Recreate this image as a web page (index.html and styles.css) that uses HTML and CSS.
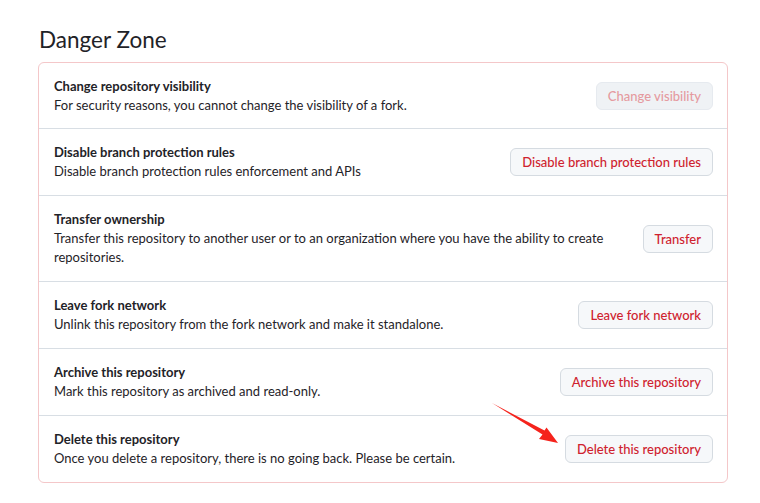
FILE: index.html
```
<!DOCTYPE html>
<html>
<head>
	<meta charset="utf-8">
	<title>Danger Zone</title>
	<link rel="stylesheet" href="styles.css">
</head>
<body>
	<div class="page">
		<h2 class="title">Danger Zone</h2>
		<div class="box">
			<div class="row">
				<div class="info">
					<strong>Change repository visibility</strong>
					<p>For security reasons, you cannot change the visibility of a fork.</p>
				</div>
				<button class="btn" disabled>Change visibility</button>
			</div>
			<div class="row">
				<div class="info">
					<strong>Disable branch protection rules</strong>
					<p>Disable branch protection rules enforcement and APIs</p>
				</div>
				<button class="btn">Disable branch protection rules</button>
			</div>
			<div class="row">
				<div class="info">
					<strong>Transfer ownership</strong>
					<p>Transfer this repository to another user or to an organization where you have the ability to create repositories.</p>
				</div>
				<button class="btn">Transfer</button>
			</div>
			<div class="row">
				<div class="info">
					<strong>Leave fork network</strong>
					<p>Unlink this repository from the fork network and make it standalone.</p>
				</div>
				<button class="btn">Leave fork network</button>
			</div>
			<div class="row">
				<div class="info">
					<strong>Archive this repository</strong>
					<p>Mark this repository as archived and read-only.</p>
				</div>
				<button class="btn">Archive this repository</button>
			</div>
			<div class="row">
				<div class="info">
					<strong>Delete this repository</strong>
					<p>Once you delete a repository, there is no going back. Please be certain.</p>
				</div>
				<button class="btn">Delete this repository</button>
			</div>
		</div>
		<!-- 标注箭头 -->
		<svg class="arrow" width="760" height="503" viewBox="0 0 760 503">
			<polygon points="492,403 544.5,430.5 546.5,427.5 558,443 539,439 542.5,434.5" fill="#f5231c"/>
		</svg>
	</div>
</body>
</html>
```

FILE: styles.css
```
* {
	margin: 0;
	padding: 0;
	box-sizing: border-box;
}
body {
	font: 13px/19px Lato, "Noto Sans", sans-serif;
	color: #1f2328;
	background: #fff;
}
.page {
	position: relative;
	padding: 24px 32px 0 38px;
	width: 760px;
	height: 503px;
}
.title {
	font-size: 22.5px;
	font-weight: 400;
	line-height: 32px;
	margin-left: 1px;
	margin-bottom: 6px;
}
.box {
	border: 1px solid #f4c7c9;
	border-radius: 6px;
}
.row {
	display: flex;
	align-items: center;
	padding: 14px 14px 14px 15px;
	border-top: 1px solid #d8dee4;
}
.row:first-child {
	border-top: 0;
	padding-top: 14px;
	padding-bottom: 13px;
}
.info {
	flex: 1;
	padding-right: 16px;
}
.info strong {
	font-weight: 700;
	display: block;
}
.btn {
	font: 500 13px/20px Lato, "Noto Sans", sans-serif;
	color: #cf222e;
	background: #f6f8fa;
	border: 1px solid #d5dbe1;
	border-radius: 6px;
	height: 28px;
	padding: 0 11px;
	white-space: nowrap;
	cursor: pointer;
}
.btn[disabled] {
	color: #e59a9f;
	background: #eff2f5;
	border-color: #e6eaef;
	cursor: default;
}
.arrow {
	position: absolute;
	left: 0;
	top: 0;
	pointer-events: none;
}
```
